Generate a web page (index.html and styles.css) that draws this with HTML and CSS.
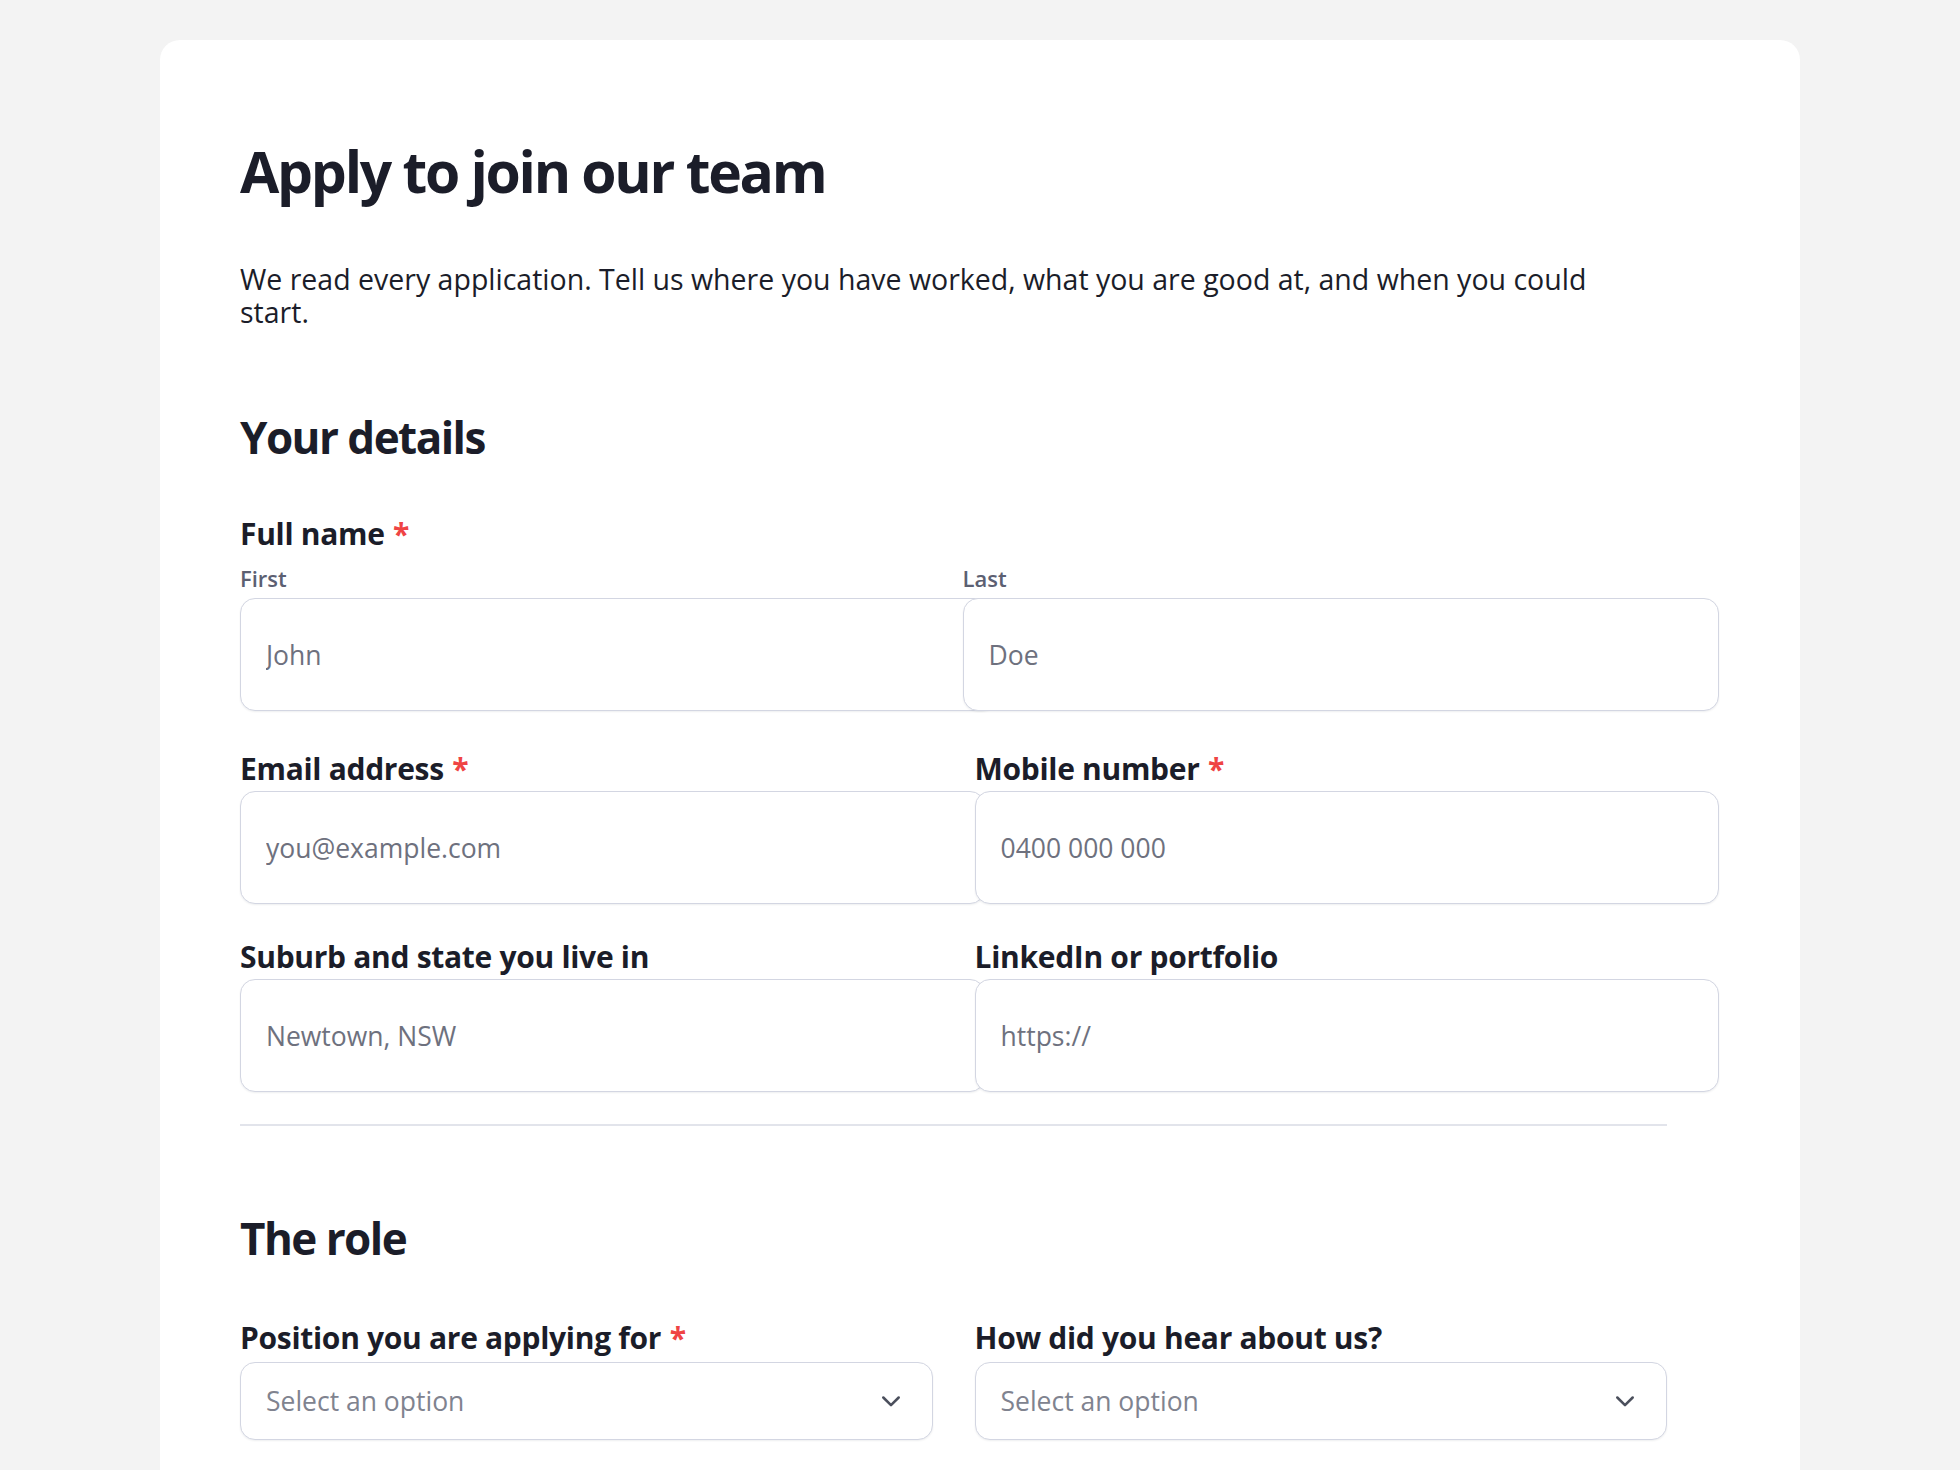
FILE: index.html
```html
<!DOCTYPE html>
<html lang="en">
<head>
    <meta charset="UTF-8">
    <meta name="viewport" content="width=device-width, initial-scale=1.0">
    <title>Apply to join our team</title>
    <link rel="stylesheet" href="styles.css">
</head>
<body>
    <main class="card">
        <form class="form">
            <h1>Apply to join our team</h1>
            <p class="intro">We read every application. Tell us where you have worked, what you are good at, and when you could start.</p>

            <section class="section">
                <h2>Your details</h2>
                <div class="fields">
                    <div class="field name-field">
                        <div class="label">Full name <span class="req">*</span></div>
                        <div class="name-grid">
                            <label class="sub">
                                <span class="sub-label">First</span>
                                <input type="text" placeholder="John">
                            </label>
                            <label class="sub">
                                <span class="sub-label">Last</span>
                                <input type="text" placeholder="Doe">
                            </label>
                        </div>
                    </div>
                    <div class="row">
                        <label class="field">
                            <span class="label">Email address <span class="req">*</span></span>
                            <input type="email" placeholder="you@example.com">
                        </label>
                        <label class="field">
                            <span class="label">Mobile number <span class="req">*</span></span>
                            <input type="tel" placeholder="0400 000 000">
                        </label>
                    </div>
                    <div class="row">
                        <label class="field">
                            <span class="label">Suburb and state you live in</span>
                            <input type="text" placeholder="Newtown, NSW">
                        </label>
                        <label class="field">
                            <span class="label">LinkedIn or portfolio</span>
                            <input type="url" placeholder="https://">
                        </label>
                    </div>
                </div>
            </section>

            <hr>

            <section class="section">
                <h2 class="role-title">The role</h2>
                <div class="row">
                    <label class="field select-field">
                        <span class="label">Position you are applying for <span class="req">*</span></span>
                        <span class="select-wrap">
                            <select>
                                <option>Select an option</option>
                            </select>
                            <svg class="chevron" viewBox="0 0 20 20" fill="none" stroke="currentColor" stroke-width="1.8" stroke-linecap="round" stroke-linejoin="round"><path d="M4.5 7.5l5.5 5.5 5.5-5.5"/></svg>
                        </span>
                    </label>
                    <label class="field select-field">
                        <span class="label">How did you hear about us?</span>
                        <span class="select-wrap">
                            <select>
                                <option>Select an option</option>
                            </select>
                            <svg class="chevron" viewBox="0 0 20 20" fill="none" stroke="currentColor" stroke-width="1.8" stroke-linecap="round" stroke-linejoin="round"><path d="M4.5 7.5l5.5 5.5 5.5-5.5"/></svg>
                        </span>
                    </label>
                </div>
            </section>
        </form>
    </main>
</body>
</html>
```

FILE: styles.css
```css
body, html {
    margin: 0;
    padding: 0;
    font-family: "Open Sans", "Noto Sans", sans-serif;
    background-color: #f3f3f3;
    color: #1b1d29;
}
.card {
    max-width: 1640px;
    margin: 40px auto 0;
    background-color: #ffffff;
    border-radius: 20px;
    padding: 95px 80px 120px;
    box-sizing: border-box;
}
.form {
    max-width: 1427px;
}
h1 {
    margin: 0 0 56px;
    font-size: 57px;
    line-height: 72px;
    font-weight: 700;
    letter-spacing: -0.04em;
}
.intro {
    margin: 0 0 82px;
    max-width: 1400px;
    font-size: 28.5px;
    line-height: 32.5px;
}
h2 {
    margin: 0 0 52px;
    font-size: 44px;
    line-height: 54px;
    font-weight: 700;
    letter-spacing: -0.035em;
}
.role-title {
    margin-bottom: 55px;
}
.fields {
    display: flex;
    flex-direction: column;
    gap: 35px;
}
.name-field {
    margin-bottom: 5px;
}
.row {
    display: grid;
    grid-template-columns: 1fr 1fr;
    gap: 42px;
}
.field {
    display: flex;
    flex-direction: column;
    gap: 4px;
}
.label {
    font-size: 30px;
    line-height: 36px;
    font-weight: 700;
    letter-spacing: -0.01em;
}
.req {
    color: #ef4444;
    margin-left: 1px;
}
.name-grid {
    display: grid;
    grid-template-columns: 1fr 1fr;
    gap: 18px;
    margin-top: 9px;
}
.sub {
    display: flex;
    flex-direction: column;
    gap: 6px;
}
.sub-label {
    font-size: 22px;
    line-height: 27px;
    font-weight: 600;
    color: #5c6072;
}
input {
    width: 100%;
    height: 61px;
    padding: 25px;
    border: 1px solid #d3d6e2;
    border-radius: 15px;
    background-color: #ffffff;
    box-shadow: 0 1px 2px rgba(16, 24, 40, 0.07);
    font-family: inherit;
    font-size: 26.5px;
    color: #1b1d29;
    outline: none;
}
input::placeholder {
    color: #6e717e;
}
hr {
    border: none;
    border-top: 2px solid #e2e4eb;
    margin: 32px 0 85px;
}
.select-field {
    gap: 6px;
}
.select-wrap {
    position: relative;
    display: block;
}
select {
    width: 100%;
    height: 78px;
    padding: 0 70px 0 25px;
    border: 1px solid #d3d6e2;
    border-radius: 15px;
    background-color: #ffffff;
    box-shadow: 0 1px 2px rgba(16, 24, 40, 0.07);
    font-family: inherit;
    font-size: 26.5px;
    color: #80838f;
    appearance: none;
    -webkit-appearance: none;
}
.chevron {
    position: absolute;
    top: 50%;
    right: 28px;
    width: 28px;
    height: 28px;
    margin-top: -14px;
    color: #4b4f5c;
    pointer-events: none;
}
```
